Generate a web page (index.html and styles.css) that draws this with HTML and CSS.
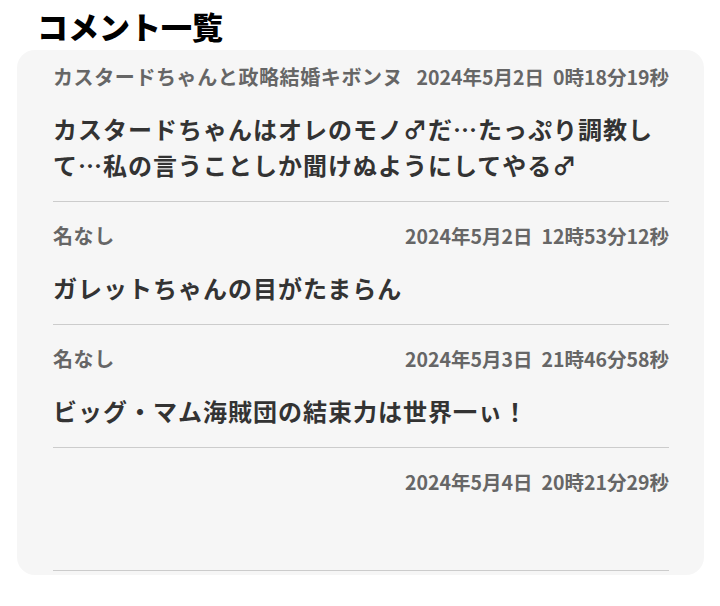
FILE: index.html
```html
<!DOCTYPE html>
<html lang="ja">
<head>
<meta charset="utf-8">
<title>コメント一覧</title>
<link rel="stylesheet" href="styles.css">
</head>
<body>
<h1 class="title">コメント一覧</h1>
<section class="card">
  <div class="comment">
    <div class="comment-head"><span class="name">カスタードちゃんと政略結婚キボンヌ</span><span class="date">2024年5月2日&nbsp; 0時18分19秒</span></div>
    <p class="message">カスタードちゃんはオレのモノ♂だ…たっぷり調教して…私の言うことしか聞けぬようにしてやる♂</p>
  </div>
  <div class="comment">
    <div class="comment-head"><span class="name">名なし</span><span class="date">2024年5月2日&nbsp; 12時53分12秒</span></div>
    <p class="message">ガレットちゃんの目がたまらん</p>
  </div>
  <div class="comment">
    <div class="comment-head"><span class="name">名なし</span><span class="date">2024年5月3日&nbsp; 21時46分58秒</span></div>
    <p class="message">ビッグ・マム海賊団の結束力は世界一ぃ！</p>
  </div>
  <div class="comment">
    <div class="comment-head"><span class="name"></span><span class="date">2024年5月4日&nbsp; 20時21分29秒</span></div>
    <p class="message"></p>
  </div>
</section>
</body>
</html>
```

FILE: styles.css
```css
* { box-sizing: border-box; }
body {
  margin: 0;
  background: #ffffff;
  font-family: "Noto Sans CJK JP", "Noto Sans", sans-serif;
}
.title {
  margin: 0;
  padding: 6px 0 0 37px;
  height: 50px;
  font-size: 31px;
  line-height: 40px;
  font-weight: 900;
  color: #000;
}
.card {
  margin: 0 16px 0 17px;
  height: 525px;
  overflow: hidden;
  background: #f6f6f6;
  border-radius: 18px;
  padding: 0 35px 0 36px;
}
.comment {
  padding: 22px 0 18px;
  border-bottom: 1px solid #cccccc;
}
.comment:first-child { padding-top: 15px; }
.comment-head {
  display: flex;
  justify-content: space-between;
  gap: 6px;
  font-size: 20px;
  line-height: 24px;
  font-weight: 700;
  color: #666666;
}
.name { letter-spacing: 0.6px; white-space: nowrap; }
.date { font-size: 19.5px; white-space: nowrap; }
.message {
  margin: 22px 0 0;
  min-height: 36px;
  font-size: 24px;
  line-height: 36px;
  letter-spacing: 1px;
  font-weight: 700;
  color: #333333;
}
```
